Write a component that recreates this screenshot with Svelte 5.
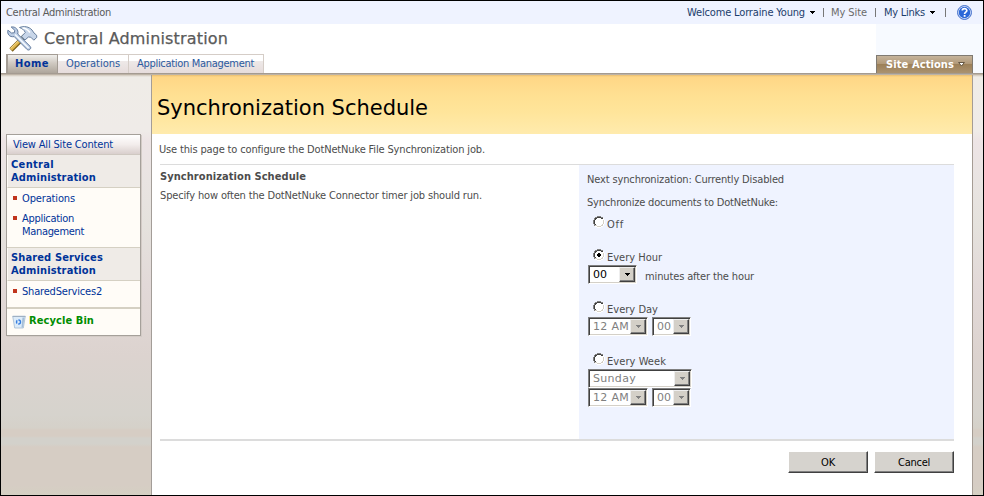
<script>
  // Tunes letter spacing so that a label occupies its designed width.
  function fit(node, width) {
    const n = node.textContent.length;
    const natural = node.getBoundingClientRect().width;
    if (n > 0) node.style.letterSpacing = (width - natural) / n + 'px';
  }
</script>

{#snippet t(text, w)}<span class="t" use:fit={w}>{text}</span>{/snippet}

{#snippet radio(on)}
  <svg class="radio" width="12" height="12" viewBox="0 0 12 12" shape-rendering="crispEdges">
    <path fill="#fff" d="M4 1h4v1h2v2h1v4h-1v2H8v1H4v-1H2V8H1V4h1V2h2z" />
    <path fill="#808080" d="M4 0h4v1H4zM2 1h2v1H2zM8 1h2v1H8zM1 2h1v2H1zM0 4h1v4H0zM1 8h1v2H1z" />
    <path fill="#404040" d="M4 1h4v1H4zM2 2h2v1H2zM8 2h2v1H8zM2 3h1v1H2zM1 4h1v4H1zM2 8h1v1H2z" />
    <path fill="#d4d0c8" d="M10 4h1v4h-1zM9 8h1v1H9zM8 9h2v1H8zM4 10h4v1H4zM2 9h2v1H2z" />
    <path fill="#fff" d="M11 4h1v4h-1zM10 8h1v2h-1zM8 10h2v1H8zM4 11h4v1H4zM2 10h2v1H2zM10 2h1v2h-1z" />
    {#if on}<path fill="#000" d="M5 4h2v1h1v2H7v1H5V7H4V5h1z" />{/if}
  </svg>
{/snippet}

{#snippet arrow()}
  <svg class="arrow" width="5" height="3" viewBox="0 0 5 3" shape-rendering="crispEdges"><path fill="currentColor" d="M0 0h5v1H4v1H3v1H2V2H1V1H0z" /></svg>
{/snippet}

{#snippet select(text, tw, w, off)}
  <div class="select" class:off style="width:{w}px">
    <span class="value">{@render t(text, tw)}</span>
    <span class="drop">{@render arrow()}</span>
  </div>
{/snippet}

<div class="window">
  <div class="topbar">
    <div class="crumb">{@render t('Central Administration', 105)}</div>
    <div class="links">
      <span class="l1">{@render t('Welcome Lorraine Young', 118)}</span>{@render arrow()}<i></i>
      <span class="l2">{@render t('My Site', 36)}</span><i></i>
      <span class="l3">{@render t('My Links', 41)}</span>{@render arrow()}<i class="last"></i>
      <svg class="help" width="15" height="15" viewBox="0 0 15 15">
        <circle cx="7.5" cy="7.5" r="6.9" fill="#e8f0ff" stroke="#2d5fc4" stroke-width="1" />
        <circle cx="7.5" cy="7.5" r="5.7" fill="#2b67d8" />
        <path d="M5.3 5.6C5.3 3 9.8 3 9.8 5.5 9.8 7.2 7.6 7 7.6 9" fill="none" stroke="#fff" stroke-width="1.7" />
        <rect x="6.7" y="10" width="1.8" height="1.8" fill="#fff" />
      </svg>
    </div>
  </div>

  <header>
    <div class="left">
      <div class="brand">
        <svg width="31" height="26" viewBox="0 0 31 26">
          <path d="M4 24L18 10" stroke="#7d6019" stroke-width="4.6" />
          <path d="M4 23.5L18 9.5" stroke="#e0b64c" stroke-width="3" />
          <path d="M3.6 22.6L16 10.4" stroke="#f5dc94" stroke-width="1" />
          <path d="M12.5 1.5C17-.2 22 .5 25 4l2 3 2.6 2.2.2 2.2-3 2.8-3-3-2.4-.2L18 14l-3.5-3.7 3.8-3.8C17 3.6 15 2.5 12.5 1.5z" fill="#c8d6e9" stroke="#69809f" />
          <path d="M15.5 2C19 2 21 4 23 6.5" fill="none" stroke="#fff" stroke-width="1.6" />
          <path d="M4.2 1L7.8 4.3 7.3 6.8 4.5 7 .9 4.2C0 8 2.4 11.4 7.2 10.6L20.2 23.6C22 25 24.9 22.5 23.3 20.5L10.7 8C12 4 8.5.2 4.2 1z" fill="#bccde5" stroke="#637b9e" />
          <path d="M8 8.5L21.6 22" stroke="#f7fbff" stroke-width="1.5" />
        </svg>
        <h1>{@render t('Central Administration', 184)}</h1>
      </div>
      <nav>
        <div class="tab home">{@render t('Home', 34)}</div>
        <div class="tab ops">{@render t('Operations', 54)}</div>
        <div class="tab app">{@render t('Application Management', 117)}</div>
      </nav>
    </div>
    <div class="right">
      <div class="actions">{@render t('Site Actions', 68)}
        <svg width="7" height="5" viewBox="0 0 7 5"><path d="M.6.5h5.8L3.5 4z" fill="#fff" stroke="#574937" stroke-width=".9" /></svg>
      </div>
    </div>
  </header>
  <div class="rule"></div>

  <div class="body">
    <aside>
      <div class="box">
        <div class="all">{@render t('View All Site Content', 100)}</div>
        <div class="head">{@render t('Central', 43)}<br />{@render t('Administration', 85)}</div>
        <ul class="u1">
          <li>{@render t('Operations', 53)}</li>
          <li>{@render t('Application', 52)}<br />{@render t('Management', 62)}</li>
        </ul>
        <div class="head">{@render t('Shared Services', 92)}<br />{@render t('Administration', 85)}</div>
        <ul class="u2"><li>{@render t('SharedServices2', 80)}</li></ul>
        <div class="bin">
          <svg width="14" height="14" viewBox="0 0 14 14">
            <path d="M.7 1.2h12.6L11.3 13H2.7z" fill="#dcebf9" stroke="#a3bad2" stroke-width=".8" />
            <path d="M.6 1.1h12.8v1H.8z" fill="#9fb0c2" />
            <path d="M10.5 2.5h2l-1.6 10H9.5z" fill="#a4bdd7" />
            <circle cx="6.5" cy="7" r="2" fill="none" stroke="#397fe0" stroke-width="1.4" stroke-dasharray="3.1 1.1" />
          </svg>{@render t('Recycle Bin', 65)}
        </div>
      </div>
    </aside>

    <main>
      <div class="banner">{@render t('Synchronization Schedule', 271)}</div>
      <p class="intro">{@render t('Use this page to configure the DotNetNuke File Synchronization job.', 326)}</p>
      <section>
        <div class="desc">
          <h2>{@render t('Synchronization Schedule', 146)}</h2>
          <p>{@render t('Specify how often the DotNetNuke Connector timer job should run.', 322)}</p>
        </div>
        <div class="panel">
          <p class="next">{@render t('Next synchronization: Currently Disabled', 197)}</p>
          <p class="sync">{@render t('Synchronize documents to DotNetNuke:', 191)}</p>
          <div class="opt o1">{@render radio(false)}<span>{@render t('Off', 17)}</span></div>
          <div class="opt o2">{@render radio(true)}<span>{@render t('Every Hour', 55)}</span></div>
          <div class="row">{@render select('00', 14, 49, false)}<span class="after">{@render t('minutes after the hour', 109)}</span></div>
          <div class="opt o3">{@render radio(false)}<span>{@render t('Every Day', 51)}</span></div>
          <div class="row">{@render select('12 AM', 36, 60, true)}{@render select('00', 14, 39, true)}</div>
          <div class="opt o3">{@render radio(false)}<span>{@render t('Every Week', 59)}</span></div>
          <div class="row">{@render select('Sunday', 43, 104, true)}</div>
          <div class="row">{@render select('12 AM', 36, 60, true)}{@render select('00', 14, 39, true)}</div>
        </div>
      </section>
      <div class="buttons">
        <div class="btn">{@render t('OK', 14)}</div>
        <div class="btn">{@render t('Cancel', 32)}</div>
      </div>
    </main>
    <div class="gutter"></div>
  </div>
</div>

<style>
  .window, .window * { box-sizing: border-box; }
  .window {
    width: 984px; height: 496px; border: 1px solid #000; overflow: hidden;
    display: flex; flex-direction: column; background: #fff; color: #4c4c4c;
    font: 11px/13px "DejaVu Sans Condensed", "DejaVu Sans", sans-serif; font-stretch: condensed;
  }
  .t { white-space: nowrap; display: inline-block; }
  svg { flex: none; display: block; }
  p, h1, h2, ul { margin: 0; padding: 0; }

  .topbar { height: 23px; flex: none; background: #eff3ff; display: flex; justify-content: space-between; }
  .crumb { padding: 5px 0 0 5px; color: #5a5a5a; }
  .links { display: flex; align-items: center; padding: 0 11px 0 0; color: #000; }
  .links i { width: 1px; height: 9px; background: #777; }
  .l1, .l3 { color: #1c3d6b; margin-right: 5px; }
  .links .arrow + i { margin-left: 8px; }
  .links .arrow + .last { margin-left: 10px; }
  .l2 { color: #6b6b6b; margin: 0 8px 0 7px; }
  .l3 { margin-left: 8px; }
  .help { margin-left: 11px; }

  header { height: 49px; flex: none; display: flex; justify-content: space-between; }
  .left { display: flex; flex-direction: column; justify-content: space-between; }
  .brand { display: flex; padding: 2px 0 0 6px; }
  h1 { font: 16px/20px "DejaVu Sans", sans-serif; -webkit-text-stroke: .25px #5a5a5a; color: #5a5a5a; margin: 3px 0 0 6px; }
  nav { display: flex; padding-left: 5px; height: 19px; }
  .tab { border: 1px solid #d5cdc7; border-left: 0; border-bottom: 0; color: #2b5aa0; padding: 2px 0 0 8px; background: linear-gradient(#fff 0 35%, #eee9e8 36%, #e6dcdb); }
  .home { width: 52px; border: 1px solid #a39c94; border-width: 1px 1px 0 2px; background: linear-gradient(#efeeeb, #cfc9c1 45%, #aea69b); font-weight: bold; color: #003399; padding-left: 7px; }
  .ops { width: 71px; }
  .app { width: 135px; }
  .right { width: 107px; background: #f7faff; display: flex; align-items: flex-end; }
  .actions { width: 97px; height: 18px; border: 1px solid #7f7a72; border-bottom: 0; background: linear-gradient(#c5b39b, #b29a79 45%, #9c8058 50%, #ab9270); color: #fff; font-weight: bold; display: flex; align-items: center; padding-left: 9px; }
  .actions svg { margin-left: 4px; }
  .rule { height: 2px; flex: none; background: linear-gradient(#a49b91 0 1px, #bdb3a6 1px 2px); }

  .body { flex: 1; display: flex; min-height: 0; }
  aside, .gutter { background: linear-gradient(#d1c8bb 0, #efece7 2px, #efebe8 56px, #ede4e5 66px, #e9e4e2 105px, #e5e2dd 150px, #e2d9d8 210px, #dcd3cf 280px, #d6d3cd 340px, #d5d1c9 353px, #d6cdc4 355px 361px, #d3d1cb 363px 369px, #d6cdc4 372px 410px, #d5d0c3 420px); }
  aside { width: 151px; border-right: 1px solid #a39d98; padding: 59px 0 0 5px; }
  .box { width: 135px; height: 202px; border: 1px solid #a5a09a; background: #fffcf7; color: #003399; box-shadow: 1px 1px 0 #d3cbc6; }
  .all { height: 20px; padding: 3px 0 0 6px; border-bottom: 1px solid #cfc8c1; background: linear-gradient(#fff, #f3edec 50%, #d9cfcd); }
  .head { height: 33px; padding: 3px 0 0 3px; font-weight: bold; background: #efebe7; border-bottom: 1px solid #d5d0c3; border-left: 1px solid #fffcf7; }
  ul { list-style: none; border-bottom: 1px solid #d5d0c3; }
  li { padding-left: 15px; position: relative; }
  li::before { content: ""; position: absolute; left: 6px; top: 4px; width: 4px; height: 4px; background: #c0341d; }
  .u1 { height: 60px; padding-top: 4px; }
  .u1 li + li { margin-top: 7px; }
  .u2 { height: 28px; padding-top: 4px; border-bottom-width: 2px; }
  .bin { display: flex; color: #008c00; font-weight: bold; padding: 5px 0 0 5px; }
  .bin svg { margin: 1px 3px 0 0; }

  main { flex: 1; background: #fff; }
  .banner { height: 59px; padding: 20px 0 0 5px; background: linear-gradient(#e8bd70 0, #ffd786 2px, #ffe092 20px, #ffe59b 38px, #ffebad); font: 21px/26px "DejaVu Sans", sans-serif; color: #000; }
  .intro { height: 30px; padding: 9px 0 0 7px; }
  section { display: flex; margin-left: 8px; width: 794px; height: 277px; border-top: 1px solid #dcdcdc; border-bottom: 2px solid #dcdcdc; }
  .desc { width: 419px; padding-top: 5px; }
  h2 { font: inherit; font-weight: bold; margin-bottom: 6px; }
  .panel { width: 375px; background: #eff3ff; padding: 8px 0 0 8px; }
  .sync { margin-top: 10px; }
  .opt { display: flex; align-items: flex-start; height: 14px; padding-left: 6px; }
  .opt span { margin-left: 2px; padding-top: 2px; }
  .opt > span > :global(.t) { margin: 0; padding: 0; }
  .o1 { margin-top: 7px; }
  .o2 { margin: 19px 0 2px; }
  .o3 { margin: 17px 0 2px; }
  .row { display: flex; height: 19px; gap: 4px; padding-left: 1px; }
  .after { padding: 5px 0 0 4px; }
  .select { height: 19px; display: flex; justify-content: space-between; background: #fff; color: #000; border: 1px solid; border-color: #808080 #fff #fff #808080; box-shadow: inset 1px 1px 0 #404040, inset -1px -1px 0 #d4d0c8; padding: 1px; font-family: "DejaVu Sans", sans-serif; font-stretch: normal; }
  .value { padding: 1px 0 0 3px; }
  .drop { width: 16px; height: 15px; background: #d4d0c8; border: 1px solid; border-color: #eee #404040 #404040 #eee; box-shadow: inset -1px -1px 0 #808080; display: flex; align-items: center; justify-content: center; }
  .off { color: #808080; }
  .buttons { display: flex; gap: 6px; padding: 10px 0 0 636px; }
  .btn { width: 80px; height: 22px; background: #d6d3ce; color: #000; border: 1px solid; border-color: #fff #404040 #404040 #fff; box-shadow: inset -1px -1px 0 #808080; display: flex; justify-content: center; padding-top: 4px; }
  .gutter { width: 11px; border-left: 1px solid #a59c94; }
</style>
